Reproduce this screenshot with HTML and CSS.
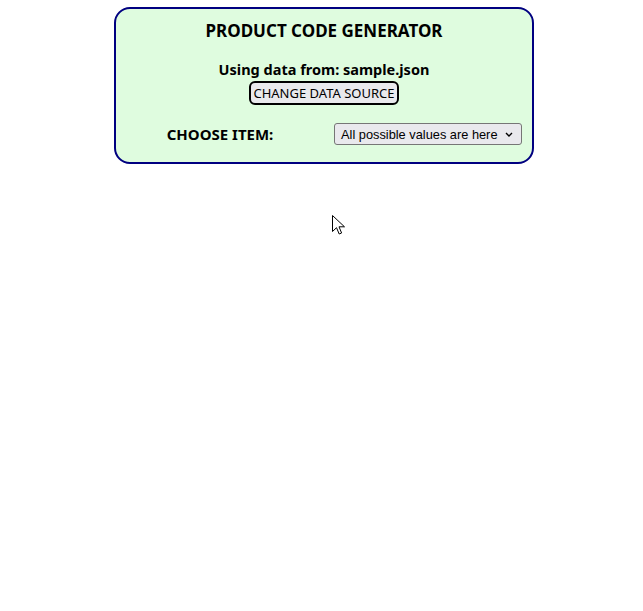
FILE: index.html
```html
<!DOCTYPE html>
<html>
<head>
<meta charset="utf-8">
<link rel="stylesheet" href="styles.css">
</head>
<body>
<div class="card">
  <h1 class="title">PRODUCT CODE GENERATOR</h1>
  <div class="source">
    <div class="source-label">Using data from: sample.json</div>
    <button class="change-btn">CHANGE DATA SOURCE</button>
  </div>
  <div class="choose-row">
    <div class="choose-label">CHOOSE ITEM:</div>
    <div class="choose-field">
      <div class="select">
        <span>All possible values are here</span>
        <svg class="chev" width="8" height="5" viewBox="0 0 8 5"><path d="M1 1 L4 4 L7 1" fill="none" stroke="#000" stroke-width="1.4"/></svg>
      </div>
    </div>
  </div>
</div>
<svg class="cursor" width="14" height="22" viewBox="0 0 14 22"><path d="M0.5 0.5 L0.5 16.5 L4.5 12.7 L7.2 19 L9.6 18 L7 11.8 L12.5 11.8 Z" fill="#fff" stroke="#000" stroke-width="1"/></svg>
</body>
</html>
```

FILE: styles.css
```css
html, body {
  margin: 0;
  padding: 0;
  background: #ffffff;
}
body {
  font-family: "Noto Sans", "Open Sans", sans-serif;
  color: #000;
}
.card {
  box-sizing: border-box;
  width: 420px;
  margin: 7px 0 0 114px;
  height: 157px;
  border: 2px solid #000080;
  border-radius: 16px;
  background: #dffcdf;
  padding-top: 10px;
}
.title {
  margin: 0;
  font-size: 17px;
  font-weight: bold;
  text-align: center;
  line-height: 24px;
}
.source {
  margin-top: 16px;
  display: flex;
  flex-direction: column;
  align-items: center;
}
.source-label {
  font-size: 14.5px;
  font-weight: bold;
  line-height: 20px;
}
.change-btn {
  margin-top: 2px;
  font-family: "Noto Sans", "Open Sans", sans-serif;
  font-size: 13px;
  height: 24px;
  padding: 0 2px;
  border: 2px solid #000;
  border-radius: 6px;
  background: #e9e9ed;
  color: #000;
  line-height: 18px;
}
.choose-row {
  margin-top: 18px;
  display: grid;
  grid-template-columns: 1fr 1fr;
  align-items: center;
}
.choose-label {
  text-align: center;
  font-size: 15px;
  font-weight: bold;
}
.choose-field {
  display: flex;
  justify-content: center;
}
.select {
  box-sizing: border-box;
  height: 22px;
  width: 188px;
  display: flex;
  align-items: center;
  justify-content: space-between;
  padding: 0 8px 0 6px;
  border: 1px solid #767676;
  border-radius: 3px;
  background: #e9e9ed;
  font-family: "Liberation Sans", Arial, sans-serif;
  font-size: 12.8px;
}
.chev {
  display: block;
}
.cursor {
  position: absolute;
  left: 332px;
  top: 215px;
}
```
